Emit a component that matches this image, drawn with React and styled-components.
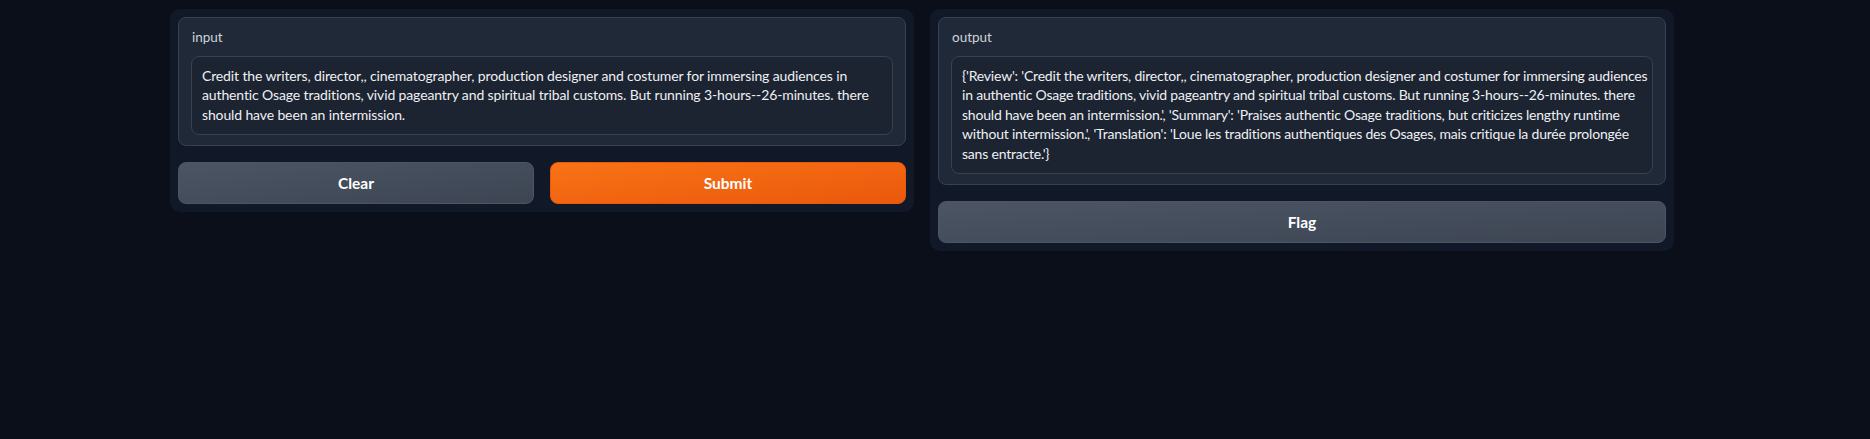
import React from "react";
import styled, { createGlobalStyle } from "styled-components";

const GlobalStyle = createGlobalStyle`
  html, body {
    margin: 0;
    padding: 0;
    background: #0b0f19;
    font-family: "Lato", "Noto Sans", sans-serif;
  }
`;

const Page = styled.div`
  min-height: 439px;
  background: #0b0f19;
  padding: 9px 0 0 170px;
  box-sizing: border-box;
`;

const Row = styled.div`
  display: flex;
  gap: 16px;
  width: 1504px;
  align-items: flex-start;
`;

const Panel = styled.div`
  flex: 1 1 0;
  min-width: 0;
  display: flex;
  flex-direction: column;
  gap: 16px;
  padding: 8px;
  background: #111827;
  border-radius: 10px;
`;

const Block = styled.div`
  background: #1f2937;
  border: 1px solid #374151;
  border-radius: 8px;
  padding: 9px 12px 10px;
  display: flex;
  flex-direction: column;
  gap: 9px;
`;

const Label = styled.span`
  font-size: 13.5px;
  line-height: 20px;
  color: #cfd3da;
  padding-left: 1px;
`;

const TextBox = styled.div`
  background: #1c2331;
  border: 1px solid #374151;
  border-radius: 8px;
  padding: 8.5px 10px 9.5px;
  font-size: 14px;
  line-height: 19.5px;
  color: #eef0f3;
  letter-spacing: ${({ tight }) => (tight ? "-0.2px" : "-0.13px")};
  overflow: hidden;
`;

const Line = styled.div`
  white-space: nowrap;
`;

const ButtonRow = styled.div`
  display: flex;
  gap: 16px;
`;

const Button = styled.button`
  flex: 1 1 0;
  height: 42px;
  border-radius: 8px;
  font-family: inherit;
  font-size: 15.5px;
  font-weight: 700;
  color: #ffffff;
  cursor: pointer;
  border: 1px solid ${({ primary }) => (primary ? "#ea580c" : "#4b5563")};
  background: ${({ primary }) =>
    primary
      ? "linear-gradient(to bottom right, #f97316, #ea580c)"
      : "linear-gradient(to bottom right, #4b5563, #3d4553)"};
`;

const inputLines = [
  "Credit the writers, director,, cinematographer, production designer and costumer for immersing audiences in",
  "authentic Osage traditions, vivid pageantry and spiritual tribal customs. But running 3-hours--26-minutes. there",
  "should have been an intermission.",
];

const outputLines = [
  "{'Review': 'Credit the writers, director,, cinematographer, production designer and costumer for immersing audiences",
  "in authentic Osage traditions, vivid pageantry and spiritual tribal customs. But running 3-hours--26-minutes. there",
  "should have been an intermission.', 'Summary': 'Praises authentic Osage traditions, but criticizes lengthy runtime",
  "without intermission.', 'Translation': 'Loue les traditions authentiques des Osages, mais critique la durée prolongée",
  "sans entracte.'}",
];

const App = () => {
  return (
    <Page>
      <GlobalStyle />
      <Row>
        <Panel>
          <Block>
            <Label>input</Label>
            <TextBox>
              {inputLines.map((l, i) => <Line key={i}>{l}</Line>)}
            </TextBox>
          </Block>
          <ButtonRow>
            <Button>Clear</Button>
            <Button primary>Submit</Button>
          </ButtonRow>
        </Panel>
        <Panel>
          <Block>
            <Label>output</Label>
            <TextBox tight>
              {outputLines.map((l, i) => <Line key={i}>{l}</Line>)}
            </TextBox>
          </Block>
          <ButtonRow>
            <Button>Flag</Button>
          </ButtonRow>
        </Panel>
      </Row>
    </Page>
  );
};

export default App;
